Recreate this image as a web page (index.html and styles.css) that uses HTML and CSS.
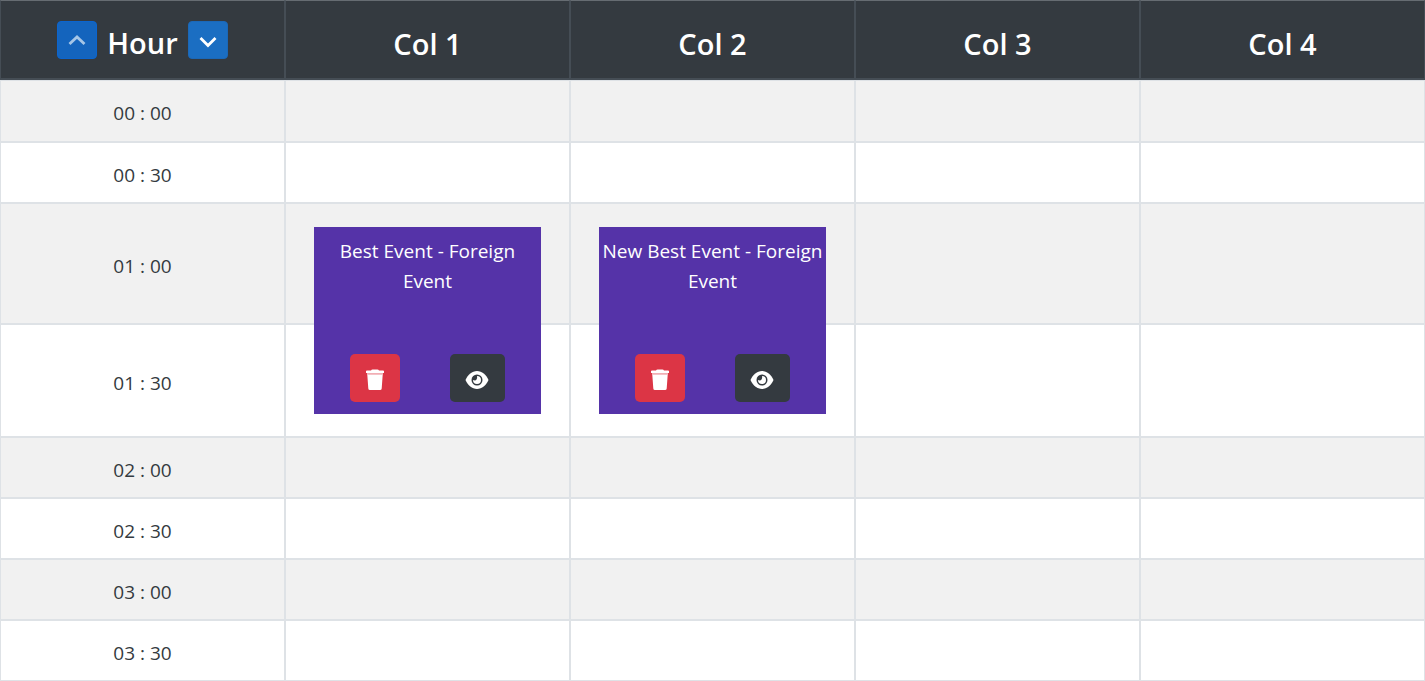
FILE: index.html
```html
<!DOCTYPE html>
<html lang="en">
<head>
<meta charset="utf-8">
<title>Schedule</title>
<link rel="stylesheet" href="styles.css">
</head>
<body>
<svg class="sprite" aria-hidden="true">
  <symbol id="up" viewBox="0 0 18 12"><path d="M1.500 10 9 3l7.500 7" fill="none" stroke="currentColor" stroke-width="2.800"/></symbol>
  <symbol id="down" viewBox="0 0 18 12"><path d="M1.500 2 9 9.500 16.500 2" fill="none" stroke="currentColor" stroke-width="2.800"/></symbol>
  <symbol id="trash" viewBox="0 0 20 22"><path fill="currentColor" d="M1 2.300Q1 1.500 2 1.500H6Q6.500.5 7.500.5H12.500Q13.500.5 14 1.500H18Q19 1.500 19 2.300V4H1ZM2.300 5.800H17.700L16.700 19.500Q16.600 21 15 21H5Q3.400 21 3.300 19.500Z"/><path fill="currentColor" opacity=".6" d="M2 4h16v2H2z"/></symbol>
  <symbol id="eye" viewBox="0 0 24 20"><path fill="currentColor" d="M.5 10C3 4.500 7 1 12 1s9 3.500 11.500 9C21 15.500 17 19 12 19S3 15.500.5 10z"/><circle cx="12" cy="10" r="5.500" fill="#343a40"/><path fill="currentColor" d="M12 6a4 4 0 1 1-4 4q2.500 1 3.500-.5T12 6z"/></symbol>
</svg>
<table class="schedule">
  <thead>
    <tr>
      <th scope="col">
        <div class="hour">
          <button class="step step-up" type="button" aria-label="Earlier hours" disabled><svg><use href="#up"/></svg></button>
          <span>Hour</span>
          <button class="step" type="button" aria-label="Later hours"><svg><use href="#down"/></svg></button>
        </div>
      </th>
      <th scope="col">Col 1</th>
      <th scope="col">Col 2</th>
      <th scope="col">Col 3</th>
      <th scope="col">Col 4</th>
    </tr>
  </thead>
  <tbody>
    <tr class="first"><td>00 : 00</td><td></td><td></td><td></td><td></td></tr>
    <tr><td>00 : 30</td><td></td><td></td><td></td><td></td></tr>
    <tr class="event-start">
      <td>01 : 00</td>
      <td>
        <article class="event">
          <p>Best Event - Foreign Event</p>
          <div class="actions">
            <button class="action delete" type="button" aria-label="Delete event"><svg><use href="#trash"/></svg></button>
            <button class="action view" type="button" aria-label="View event"><svg><use href="#eye"/></svg></button>
          </div>
        </article>
      </td>
      <td>
        <article class="event">
          <p>New Best Event - Foreign Event</p>
          <div class="actions">
            <button class="action delete" type="button" aria-label="Delete event"><svg><use href="#trash"/></svg></button>
            <button class="action view" type="button" aria-label="View event"><svg><use href="#eye"/></svg></button>
          </div>
        </article>
      </td>
      <td></td><td></td>
    </tr>
    <tr class="event-end"><td>01 : 30</td><td></td><td></td><td></td><td></td></tr>
    <tr><td>02 : 00</td><td></td><td></td><td></td><td></td></tr>
    <tr><td>02 : 30</td><td></td><td></td><td></td><td></td></tr>
    <tr><td>03 : 00</td><td></td><td></td><td></td><td></td></tr>
    <tr><td>03 : 30</td><td></td><td></td><td></td><td></td></tr>
  </tbody>
</table>
</body>
</html>
```
FILE: styles.css
```css
* { box-sizing: border-box; }

body {
  margin: 0;
  font-family: "Segoe UI", "Open Sans", "Noto Sans", sans-serif;
  font-size: 19px;
  line-height: 30px;
  color: #343a40;
  background: #fff;
}

.sprite { position: absolute; width: 0; height: 0; }

.schedule {
  width: 100%;
  table-layout: fixed;
  border-collapse: separate;
  border-spacing: 0;
  text-align: center;
}

th {
  height: 80px;
  padding: 8px 0 0;
  border: 1px solid #454d55;
  border-bottom-width: 2px;
  background: #343a40;
  color: #fff;
  font-size: 29px;
  font-weight: 600;
}

thead th { border-top-color: #666c72; }

td {
  position: relative;
  height: 61px;
  padding: 4px 0 0;
  border: 1px solid #dee2e6;
}

tbody tr:nth-child(odd) { background: #f1f1f1; }
.first td { height: 62px; }
.event-start td { height: 121px; }
.event-end td { height: 113px; }

.hour {
  display: flex;
  align-items: center;
  justify-content: center;
  gap: 10px;
  padding-bottom: 8px;
}

.hour span { padding-top: 6px; }

.step {
  display: flex;
  align-items: center;
  justify-content: center;
  width: 40px;
  height: 38px;
  padding: 0;
  border: 1px solid #1b68b8;
  border-radius: 4px;
  background: #1b6ec2;
  color: #fff;
}

.step svg { width: 18px; height: 12px; margin-top: 4px; }

.step-up {
  border-color: #0b65d0;
  background: #1464bd;
  color: #a6c6e7;
}

.step-up svg { margin: 0; }

.event {
  position: absolute;
  z-index: 1;
  top: 23px;
  left: 10%;
  display: flex;
  flex-direction: column;
  justify-content: space-between;
  width: 80%;
  height: 187px;
  padding: 9px 0 12px;
  background: #5533a8;
  color: #fff;
}

.event p { margin: 0; }

.actions {
  display: flex;
  justify-content: space-between;
  padding: 0 36px;
}

.action {
  display: flex;
  align-items: center;
  justify-content: center;
  width: 50px;
  height: 48px;
  padding: 4px 0 0;
  border: 0;
  border-radius: 5px;
  color: #fff;
}

.delete { background: #dc3545; }
.delete svg { width: 20px; height: 22px; }
.view { width: 55px; background: #343a40; }
.view svg { width: 24px; height: 20px; }
```
